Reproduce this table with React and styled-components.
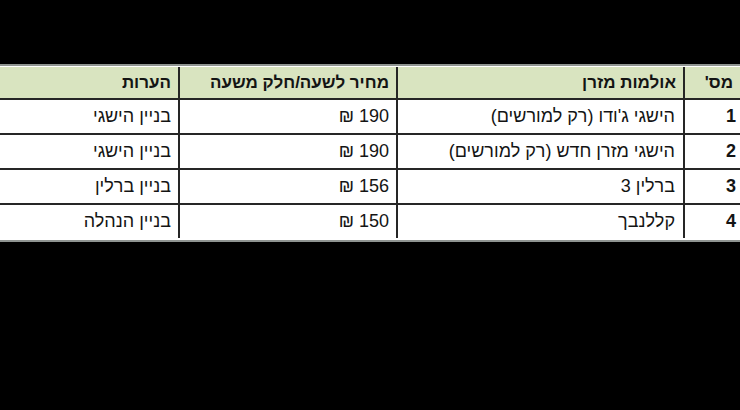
import React from "react";
import styled, { createGlobalStyle } from "styled-components";

const Global = createGlobalStyle`
  html, body { margin: 0; padding: 0; background: #000; }
  body { font-family: "Liberation Sans", Arial, sans-serif; }
`;

const Page = styled.div`
  width: 740px;
  height: 410px;
  background: #000;
  padding-top: 64px;
  box-sizing: border-box;
  overflow: hidden;
`;

const Frame = styled.div`
  background: #fff;
  border-top: 2px solid #8f9491;
  border-bottom: 2px solid #8f9491;
  padding: 1px 0 2px;
`;

const Table = styled.table`
  direction: rtl;
  width: 760px;
  margin-right: -20px;
  border-collapse: collapse;
  table-layout: fixed;
  font-family: "Liberation Sans", Arial, sans-serif;
  color: #141414;
`;

const Th = styled.th`
  background: #d9e4c0;
  font-weight: bold;
  font-size: 17px;
  height: 31px;
  text-align: right;
  padding: 0 ${(p) => p.$pad || 7}px 0 0;
  border-left: 2px solid #262626;
  border-bottom: 2px solid #262626;
  &:last-child { border-left: none; }
`;

const Td = styled.td`
  font-size: 18px;
  font-weight: ${(p) => (p.$bold ? "bold" : "normal")};
  height: 33px;
  text-align: right;
  padding: 0 ${(p) => p.$pad || 7}px 0 0;
  border-left: 2px solid #262626;
  border-bottom: 2px solid #262626;
  &:last-child { border-left: none; }
  tr:last-child & { border-bottom: none; }
`;

const rows = [
  ["1", "הישגי ג'ודו (רק למורשים)", "190 ₪", "בניין הישגי"],
  ["2", "הישגי מזרן חדש (רק למורשים)", "190 ₪", "בניין הישגי"],
  ["3", "ברלין 3", "156 ₪", "בניין ברלין"],
  ["4", "קללנבך", "150 ₪", "בניין הנהלה"],
];

export default function App() {
  return (
    <Page>
      <Global />
      <Frame>
        <Table>
          <colgroup>
            <col style={{ width: 76 }} />
            <col style={{ width: 287 }} />
            <col style={{ width: 218 }} />
            <col style={{ width: 179 }} />
          </colgroup>
          <thead>
            <tr>
              <Th $pad={27}>מס'</Th>
              <Th>אולמות מזרן</Th>
              <Th>מחיר לשעה/חלק משעה</Th>
              <Th>הערות</Th>
            </tr>
          </thead>
          <tbody>
            {rows.map((r) => (
              <tr key={r[0]}>
                <Td $bold $pad={24}>{r[0]}</Td>
                <Td $pad={8}>{r[1]}</Td>
                <Td>{r[2]}</Td>
                <Td>{r[3]}</Td>
              </tr>
            ))}
          </tbody>
        </Table>
      </Frame>
    </Page>
  );
}
